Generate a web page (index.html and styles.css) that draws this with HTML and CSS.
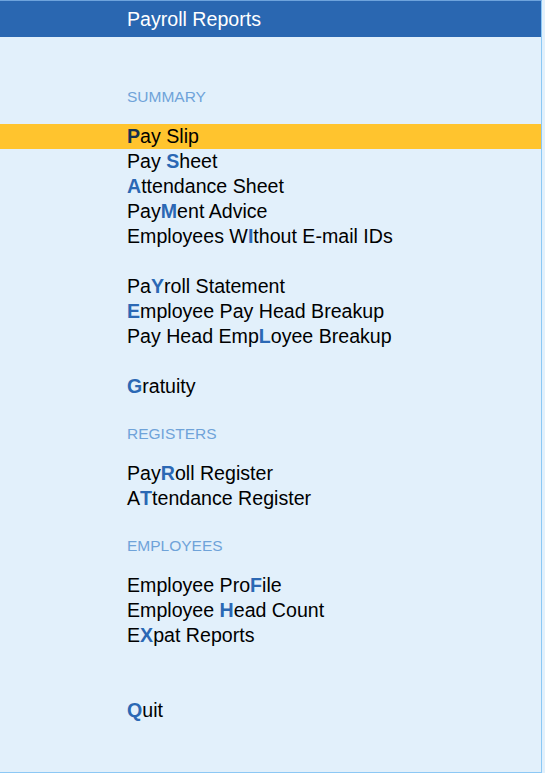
FILE: index.html
```html
<!DOCTYPE html>
<html lang="en">
<head>
  <meta charset="UTF-8">
  <title>Payroll Reports</title>
  <link rel="stylesheet" href="styles.css">
</head>
<body>

  <div class="painel">
    <div class="titulo">Payroll Reports</div>

    <div class="menu">
      <div class="secao">SUMMARY</div>
      <div class="item ativo"><b>P</b>ay Slip</div>
      <div class="item">Pay <b>S</b>heet</div>
      <div class="item"><b>A</b>ttendance Sheet</div>
      <div class="item">Pay<b>M</b>ent Advice</div>
      <div class="item">Employees W<b>I</b>thout E-mail IDs</div>
      <div class="vazio"></div>
      <div class="item">Pa<b>Y</b>roll Statement</div>
      <div class="item"><b>E</b>mployee Pay Head Breakup</div>
      <div class="item">Pay Head Emp<b>L</b>oyee Breakup</div>
      <div class="vazio"></div>
      <div class="item"><b>G</b>ratuity</div>

      <div class="secao">REGISTERS</div>
      <div class="item">Pay<b>R</b>oll Register</div>
      <div class="item">A<b>T</b>tendance Register</div>

      <div class="secao">EMPLOYEES</div>
      <div class="item">Employee Pro<b>F</b>ile</div>
      <div class="item">Employee <b>H</b>ead Count</div>
      <div class="item">E<b>X</b>pat Reports</div>
      <div class="vazio"></div>
      <div class="vazio"></div>
      <div class="item"><b>Q</b>uit</div>
    </div>
  </div>

</body>
</html>
```

FILE: styles.css
```css
body {
  margin: 0;
  font-family: "Liberation Sans", Arial, sans-serif;
  background: #e2f0fb;
}

.painel {
  width: 541px;
  height: 771px;
  background: #e2f0fb;
  border-top: 1px solid #6ea3dc;
  border-right: 1px solid #8cc8f5;
  border-bottom: 1px solid #8cc8f5;
}

.titulo {
  height: 36px;
  line-height: 36px;
  background: #2a67b1;
  color: #fff;
  font-size: 19.6px;
  padding-left: 127px;
}

.menu {
  padding-top: 25px;
}

.secao {
  margin: 22px 0 15px;
  height: 25px;
  line-height: 25px;
  padding-left: 127px;
  font-size: 15.5px;
  color: #6fa3d9;
}

.item {
  height: 25px;
  line-height: 25px;
  padding-left: 127px;
  font-size: 19.6px;
  color: #000;
}

.item b {
  color: #2b68b4;
}

.item.ativo {
  background: #ffc42e;
}

.item.ativo b {
  color: #16324f;
}

.vazio {
  height: 25px;
}
```
